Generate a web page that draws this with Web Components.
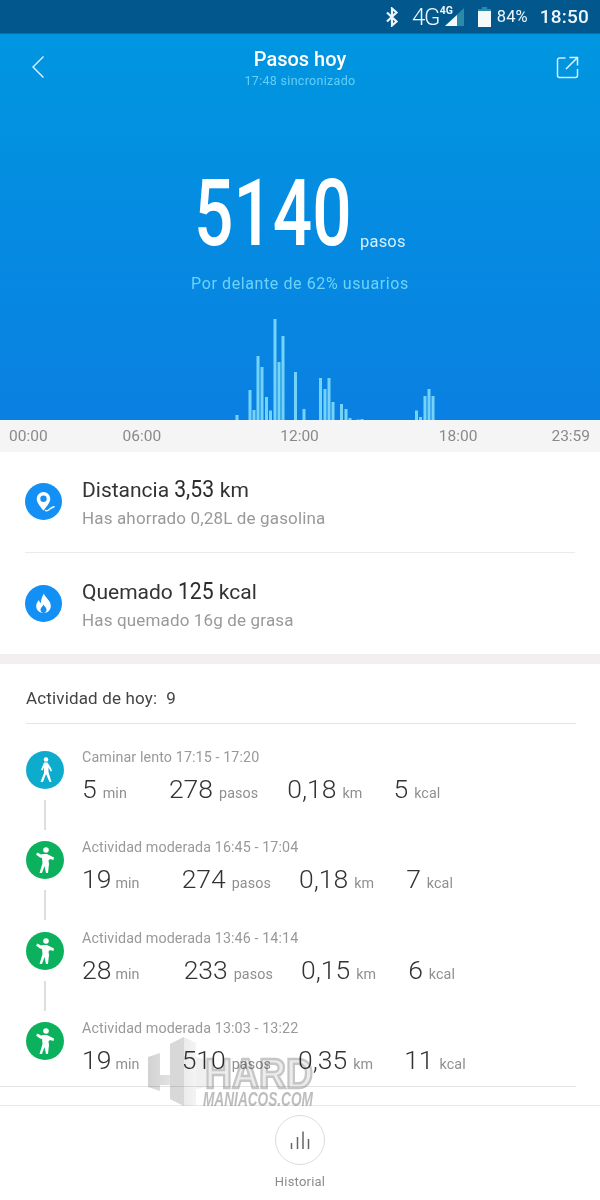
<!DOCTYPE html>
<html lang="es">
<head>
<meta charset="utf-8">
<title>Pasos hoy</title>
<style>
  html, body { margin: 0; padding: 0; background: #fff; }
  body { width: 600px; height: 1200px; overflow: hidden; position: relative; font-family: Roboto, "Liberation Sans", sans-serif; }
</style>
</head>
<body>
<status-bar></status-bar>
<steps-hero></steps-hero>
<time-axis></time-axis>
<stat-card>
  <stat-row icon="pin" label="Distancia" value="3,53" unit="km" note="Has ahorrado 0,28L de gasolina"></stat-row>
  <stat-row icon="flame" label="Quemado" value="125" unit="kcal" note="Has quemado 16g de grasa"></stat-row>
</stat-card>
<activity-list heading="Actividad de hoy:" count="9">
  <activity-row kind="walk" title="Caminar lento 17:15 - 17:20" min="5" steps="278" km="0,18" kcal="5" gaps="42 29 31" line></activity-row>
  <activity-row kind="move" title="Actividad moderada 16:45 - 17:04" min="19" steps="274" km="0,18" kcal="7" gaps="42 28 32" line></activity-row>
  <activity-row kind="move" title="Actividad moderada 13:46 - 14:14" min="28" steps="233" km="0,15" kcal="6" gaps="44 28 32" line></activity-row>
  <activity-row kind="move" title="Actividad moderada 13:03 - 13:22" min="19" steps="510" km="0,35" kcal="11" gaps="42 27 31"></activity-row>
</activity-list>
<bottom-nav></bottom-nav>
<site-mark></site-mark>

<script>
// status bar
class StatusBar extends HTMLElement {
  constructor() {
    super();
    this.attachShadow({ mode: 'open' });
  }
  connectedCallback() {
    this.shadowRoot.innerHTML = `
      <style>
        :host { display: flex; align-items: center; justify-content: flex-end; box-sizing: border-box; height: 34px; padding-right: 11px; background: #02588c; border-bottom: 1px solid #0b70ad; color: #eef6fb; font-family: Roboto, sans-serif; }
        svg { display: block; flex: none; }
        .net { font-size: 24px; font-weight: 300; letter-spacing: -1.500px; margin-left: 13px; line-height: 34px; }
        .net4 { font-size: 10.500px; font-weight: 700; align-self: flex-start; margin: 4px 0 0 1px; width: 11px; }
        .pct { font-size: 16.500px; font-weight: 400; margin-left: 6px; letter-spacing: .1px; }
        .clock { font-size: 19px; font-weight: 500; margin-left: 12px; letter-spacing: .2px; }
      </style>
      <svg width="14" height="20" viewBox="0 0 14 20"><path d="M2 5.500 11.500 14.500 7 18.500V1.500L11.500 5.500 2 14.500" fill="none" stroke="#eef6fb" stroke-width="2.200"/></svg>
      <span class="net">4G</span><span class="net4">4G</span>
      <svg width="20" height="20" viewBox="0 0 20 20" style="margin-left:-6px"><path d="M0 19 19 1V19Z" fill="#2a8aa8"/><path d="M0 19 12 8V19Z" fill="#f4f9fc"/></svg>
      <svg width="13" height="20" viewBox="0 0 13 20" style="margin-left:13px"><path d="M4 0H9V2H13V20H0V2H4Z" fill="#f4f9fc"/><path d="M4 0H9V2H13V4H0V2H4Z" fill="#2a8aa8"/></svg>
      <span class="pct">84%</span>
      <span class="clock">18:50</span>`;
  }
}
customElements.define('status-bar', StatusBar);

// blue header with step count and the day chart
class StepsHero extends HTMLElement {
  constructor() {
    super();
    this.attachShadow({ mode: 'open' });
  }
  connectedCallback() {
    // x, top of each bar as read from the day chart
    const bars = [[237,415],[250,390],[254,410],[258,356],[262,367],[266.500,397],[270.500,410.500],[275,319],[279,362],[283,336],[295.500,372],[304,409],[320.500,378],[325,389],[329,378],[333,402],[341.500,404],[346,409],[350,418],[358,419.500],[362,419],[416.500,410.500],[420.500,417],[425,396],[429,389],[433,396]];
    const rects = bars.map(([x, top]) => `<rect x="${x - 1.5}" y="${top - 310}" width="3" height="${420 - top}"/>`).join('');
    this.shadowRoot.innerHTML = `
      <style>
        :host { display: block; height: 386px; background: linear-gradient(#0096e0, #0a80e2); color: #fff; font-family: Roboto, sans-serif; }
        .top { display: grid; grid-template-columns: 1fr auto 1fr; align-items: start; height: 56px; padding: 0 20px; }
        .top svg { margin-top: 21px; }
        .top svg:first-child { margin-left: 11px; }
        .top svg:last-child { justify-self: end; }
        .titles { text-align: center; margin-top: 12px; }
        .title { font-size: 20px; font-weight: 500; line-height: 26px; }
        .sync { font-size: 12.500px; color: #62d0f7; line-height: 20px; letter-spacing: .3px; margin-top: -1px; }
        .count { display: flex; align-items: flex-end; height: 100px; margin: 70px 0 0 194px; }
        .num { display: block; width: 157px; font-size: 93px; line-height: 93px; font-weight: 500; transform: scaleX(.745); transform-origin: left center; white-space: nowrap; }
        .unit { font-size: 16.500px; color: #d6f0fc; margin: 0 0 9px 9px; letter-spacing: .2px; }
        .rank { text-align: center; font-size: 16px; color: #6fd3f8; letter-spacing: .6px; margin-top: 14px; line-height: 20px; }
        .chart { display: block; margin-top: 16px; }
      </style>
      <div class="top">
        <svg width="14" height="24" viewBox="0 0 14 24"><path d="M12.500 1.500 2 12 12.500 22.500" fill="none" stroke="#e4f5fd" stroke-width="1.400"/></svg>
        <div class="titles"><div class="title">Pasos hoy</div><div class="sync">17:48 sincronizado</div></div>
        <svg width="24" height="24" viewBox="0 0 24 24"><path d="M9.500 3H3.500A2 2 0 0 0 1.500 5V20.500A2 2 0 0 0 3.500 22.500H19.500A2 2 0 0 0 21.500 20.500V14" fill="none" stroke="#cfeefc" stroke-width="1.500"/><path d="M10 14 21 3M13.500 2.500H21.500V10.500" fill="none" stroke="#e4f5fd" stroke-width="1.500"/></svg>
      </div>
      <div class="count"><span class="num">5140</span><span class="unit">pasos</span></div>
      <div class="rank">Por delante de 62% usuarios</div>
      <svg class="chart" width="600" height="110" viewBox="0 0 600 110" fill="#74d3f9">${rects}</svg>`;
  }
}
customElements.define('steps-hero', StepsHero);

class TimeAxis extends HTMLElement {
  constructor() {
    super();
    this.attachShadow({ mode: 'open' });
  }
  connectedCallback() {
    this.shadowRoot.innerHTML = `
      <style>
        :host { display: flex; align-items: center; height: 32px; padding-left: 9px; background: #f5f5f5; color: #8a8a8a; font: 15.500px Roboto, sans-serif; }
        .m6 { margin-left: 75px; } .m12 { margin-left: 119px; } .m18 { margin-left: 120px; } .end { margin-left: 74px; }
      </style>
      <span>00:00</span><span class="m6">06:00</span><span class="m12">12:00</span><span class="m18">18:00</span><span class="end">23:59</span>`;
  }
}
customElements.define('time-axis', TimeAxis);

class StatCard extends HTMLElement {
  constructor() {
    super();
    this.attachShadow({ mode: 'open' });
    this.shadowRoot.innerHTML = `
      <style>
        :host { display: block; height: 202px; box-sizing: content-box; background: #fff; border-bottom: 10px solid #f1eff0; }
        ::slotted(stat-row:first-child) { border-bottom: 1px solid #ebebeb; }
      </style>
      <slot></slot>`;
  }
}
customElements.define('stat-card', StatCard);

const STAT_ICONS = {
  pin: `<path d="M19 9.500a6.800 6.800 0 0 0-6.800 6.800c0 4 3.700 7.800 6.200 11.300.3.400.9.400 1.100 0 2.300-3.500 6.300-7.300 6.300-11.300A6.800 6.800 0 0 0 19 9.500Z" fill="#fff"/><circle cx="19" cy="16.200" r="3.200" fill="#1390f5"/><path d="M21 28c1.600 1.200 3-.2 4-1.200s2-2 4.500-2.600" fill="none" stroke="#fff" stroke-width="1.400" stroke-linecap="round"/>`,
  flame: `<path d="M19.500 9c.6 3.800 6.800 6.500 6.800 12.500 0 4.200-3.200 7-7.300 7s-7.300-2.800-7.300-6.900c0-2.600 1.300-4.400 2.800-6 .2 1.500.9 2.600 1.900 3 .1-4 1.500-7.300 3.100-9.600Z" fill="#fff"/><path d="M19 20c.4 1.600 3 2.800 3 5.200 0 1.700-1.300 3.300-3 3.300s-3-1.500-3-3.300c0-2.200 2.400-3.400 3-5.200Z" fill="#1390f5"/>`
};

class StatRow extends HTMLElement {
  constructor() {
    super();
    this.attachShadow({ mode: 'open' });
  }
  connectedCallback() {
    const a = n => this.getAttribute(n);
    this.shadowRoot.innerHTML = `
      <style>
        :host { display: flex; align-items: center; box-sizing: border-box; height: 101px; margin: 0 25px; font-family: Roboto, sans-serif; }
        svg { flex: none; display: block; margin-right: 20px; margin-top: -1px; }
        .main { font-size: 21px; color: #333; line-height: 26px; }
        .val { font-size: 23.500px; display: inline-block; transform: scaleX(.9); transform-origin: center; margin: 0 -2px; color: #2c2c2c; }
        .note { font-size: 17px; color: #999; line-height: 20px; margin-top: 5px; letter-spacing: .15px; }
      </style>
      <svg width="37" height="37" viewBox="0 0 37 37"><circle cx="18.500" cy="18.500" r="18.500" fill="#1390f5"/><g transform="translate(-.5 -.5)">${STAT_ICONS[a('icon')]}</g></svg>
      <div>
        <div class="main">${a('label')} <span class="val">${a('value')}</span> ${a('unit')}</div>
        <div class="note">${a('note')}</div>
      </div>`;
  }
}
customElements.define('stat-row', StatRow);

class ActivityList extends HTMLElement {
  constructor() {
    super();
    this.attachShadow({ mode: 'open' });
  }
  connectedCallback() {
    this.shadowRoot.innerHTML = `
      <style>
        :host { display: block; font-family: Roboto, sans-serif; }
        .head { height: 60px; margin: 0 24px 0 26px; display: flex; align-items: center; gap: 9px; border-bottom: 1px solid #e4e4e4; font-size: 17px; color: #444; padding-top: 8px; box-sizing: border-box; letter-spacing: .15px; }
        .rows { padding: 24px 0 0; height: 363px; box-sizing: border-box; border-bottom: 1px solid #e4e4e4; margin: 0 24px 0 0; }
      </style>
      <div class="head"><span>${this.getAttribute('heading')}</span><span>${this.getAttribute('count')}</span></div>
      <div class="rows"><slot></slot></div>`;
  }
}
customElements.define('activity-list', ActivityList);

const FIGURES = {
  walk: `<circle cx="20" cy="8.500" r="2.300"/><path d="M18 11.500H21.500L25 17 26 20 24.800 20.500 22.500 16.500V21L25.500 31H23.500L20 23 17 31H14.500L18 22V16.500L16.500 19.500 15 19Z"/>`,
  move: `<circle cx="20" cy="9" r="2.800"/><path d="M10 13.500 11.500 11.500 15 13.500 17 13H21L28 16.500 27.500 19 24 18 22.500 19.500 23 23 22 32H20L18.500 25 16 32H13.500L16.500 22 16 17 14 16.500Z"/>`
};

class ActivityRow extends HTMLElement {
  constructor() {
    super();
    this.attachShadow({ mode: 'open' });
  }
  connectedCallback() {
    const a = n => this.getAttribute(n);
    const walk = a('kind') === 'walk';
    const two = a('min').length > 1;
    const [g2, g3, g4] = a('gaps').split(' ');
    this.shadowRoot.innerHTML = `
      <style>
        :host { display: flex; height: 90.330px; font-family: Roboto, sans-serif; }
        .rail { flex: none; width: 82px; padding: 3px 0 0 26px; box-sizing: border-box; }
        .rail svg { display: block; }
        .link { width: 2px; height: 30px; margin: 11px 0 0 18px; background: #dedede; }
        .title { font-size: 14.300px; color: #999; line-height: 18px; letter-spacing: .1px; }
        .vals { display: flex; align-items: baseline; margin-top: 7px; color: #333; line-height: 32px; }
        .vals b { font-weight: 300; font-size: 26.500px; }
        .vals i { font-style: normal; font-size: 14.300px; color: #8f8f8f; margin-left: 6px; letter-spacing: .1px; }
        .first i { margin-left: ${two ? 4 : 6}px; }
        .g2 { margin-left: ${g2}px; } .g3 { margin-left: ${g3}px; } .g4 { margin-left: ${g4}px; }
      </style>
      <div class="rail">
        <svg width="38" height="38" viewBox="0 0 38 38"><circle cx="19" cy="19" r="19" fill="${walk ? '#0daccd' : '#0bb15c'}"/><g fill="#fff">${walk ? FIGURES.walk : FIGURES.move}</g></svg>
        ${this.hasAttribute('line') ? '<div class="link"></div>' : ''}
      </div>
      <div>
        <div class="title">${a('title')}</div>
        <div class="vals">
          <span class="first"><b>${a('min')}</b><i>min</i></span>
          <span class="g2"><b>${a('steps')}</b><i>pasos</i></span>
          <span class="g3"><b>${a('km')}</b><i>km</i></span>
          <span class="g4"><b>${a('kcal')}</b><i>kcal</i></span>
        </div>
      </div>`;
  }
}
customElements.define('activity-row', ActivityRow);

class BottomNav extends HTMLElement {
  constructor() {
    super();
    this.attachShadow({ mode: 'open' });
  }
  connectedCallback() {
    this.shadowRoot.innerHTML = `
      <style>
        :host { display: flex; flex-direction: column; align-items: center; box-sizing: border-box; margin-top: 18px; height: 94px; border-top: 1px solid #e8e8e8; padding-top: 9px; font: 13px Roboto, sans-serif; color: #8c8c8c; background: #fff; }
        .btn { width: 48px; height: 48px; border: 1px solid #dcdcdc; border-radius: 50%; display: flex; align-items: center; justify-content: center; }
        span { margin-top: 9px; letter-spacing: .2px; }
      </style>
      <div class="btn">
        <svg width="22" height="22" viewBox="0 0 22 22" fill="none" stroke="#666" stroke-width="1.500"><path d="M2.500 20V14M8.500 20V8M14 20V2.500M19.500 20V10"/></svg>
      </div>
      <span>Historial</span>`;
  }
}
customElements.define('bottom-nav', BottomNav);

// translucent site watermark laid over the list
class SiteMark extends HTMLElement {
  constructor() {
    super();
    this.attachShadow({ mode: 'open' });
  }
  connectedCallback() {
    this.shadowRoot.innerHTML = `
      <style>
        :host { position: absolute; left: 148px; top: 1037px; width: 170px; height: 72px; font-family: "Liberation Sans", sans-serif; pointer-events: none; mix-blend-mode: multiply; }
        svg { position: absolute; left: 0; top: 0; }
        .hard { position: absolute; left: 57px; top: 16px; font-size: 42px; line-height: 42px; font-weight: 700; color: #ececec; -webkit-text-stroke: 2.500px #c6c6c6; transform: scaleX(.89); transform-origin: left; }
        .site { position: absolute; left: 55px; top: 52px; font-size: 19.500px; line-height: 20px; font-weight: 700; font-style: italic; color: #bdbdbd; transform: scaleX(.7); transform-origin: left; white-space: nowrap; }
      </style>
      <svg width="62" height="70" viewBox="0 0 62 70">
        <defs><linearGradient id="g" x1="0" x2="1"><stop offset="0" stop-color="#d2d2d2"/><stop offset="1" stop-color="#f4f4f4"/></linearGradient></defs>
        <path d="M0 20 12 16V38H22V7L36 0 48 6V68L36 69 22 62V48H12V54L0 50Z" fill="url(#g)"/>
        <path d="M36 0V69L22 62V7Z" fill="#d8d8d8"/>
        <path d="M48 20 58 23V50L48 52Z" fill="#f0f0f0"/>
      </svg>
      <span class="hard">HARD</span>
      <span class="site">MANIACOS.COM</span>`;
  }
}
customElements.define('site-mark', SiteMark);
</script>
</body>
</html>
